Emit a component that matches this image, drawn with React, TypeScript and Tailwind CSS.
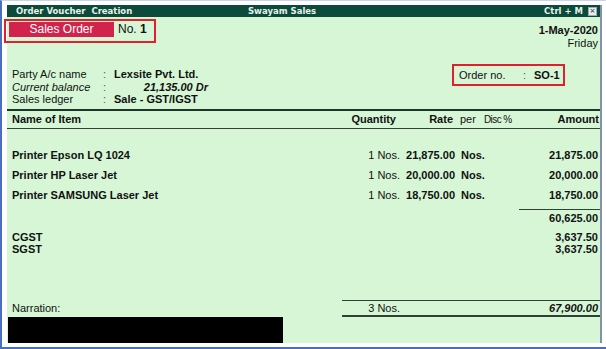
import React from "react";

const items = [
  { name: "Printer Epson LQ 1024", qty: "1 Nos.", rate: "21,875.00", per: "Nos.", amt: "21,875.00" },
  { name: "Printer HP Laser Jet", qty: "1 Nos.", rate: "20,000.00", per: "Nos.", amt: "20,000.00" },
  { name: "Printer SAMSUNG Laser Jet", qty: "1 Nos.", rate: "18,750.00", per: "Nos.", amt: "18,750.00" },
];

const cols = "grid grid-cols-[335px_59px_55px_25px_29px_1fr]";

export default function App() {
  return (
    <div className="w-[606px] h-[349px] bg-white border-l-2 border-b-2 border-t border-l-[#4a6fbf] border-b-[#4a6fbf] border-t-[#c9d5ee] pt-[4px] pl-[5px] font-['Liberation_Sans',Arial,sans-serif] text-[11px] text-[#111] overflow-hidden">
      <div className="w-[595px] h-[338px] bg-[#d6f6d6] border-r-2 border-[#8391aa] flex flex-col">
        {/* Title bar */}
        <div className="h-[12px] shrink-0 bg-[#0c4a3b] text-[#e6f3ea] flex items-center font-['DejaVu_Sans',sans-serif] font-bold text-[8.5px] leading-none">
          <div className="w-[241px] pl-[9px] whitespace-pre">Order Voucher  Creation</div>
          <div>Swayam Sales</div>
          <div className="flex-1" />
          <div className="mr-[5px]">Ctrl + M</div>
          <div className="w-[9px] h-[9px] mr-[3px] bg-[#e8eef0] border border-[#9aa] flex items-center justify-center text-[#556] text-[7px] leading-none">×</div>
        </div>

        {/* Header section */}
        <div className="h-[92px] shrink-0 flex justify-between">
          <div className="flex flex-col">
            <div className="mt-[2px] -ml-[3px] w-[152px] h-[24px] border-2 border-[#e0202e] flex items-start pt-[1px] pl-[3px]">
              <div className="w-[105px] h-[15px] bg-[#d1234c] text-white text-[12px] leading-[15px] text-center">Sales Order</div>
              <div className="ml-[4px] text-[12px] leading-[15px]">
                No. <span className="font-bold">1</span>
              </div>
            </div>
            <div className="mt-[25px] pl-[5px] leading-[12.5px]">
              <div className="flex">
                <div className="w-[91px]">Party A/c name</div>
                <div className="w-[11px] text-[#555]">:</div>
                <div className="font-bold">Lexsite Pvt. Ltd.</div>
              </div>
              <div className="flex">
                <div className="w-[91px] italic">Current balance</div>
                <div className="w-[11px] text-[#555]">:</div>
                <div className="w-[94px] text-right font-bold italic">21,135.00 Dr</div>
              </div>
              <div className="flex">
                <div className="w-[91px]">Sales ledger</div>
                <div className="w-[11px] text-[#555]">:</div>
                <div className="font-bold">Sale - GST/IGST</div>
              </div>
            </div>
          </div>
          <div className="flex flex-col items-end pr-[2px]">
            <div className="mt-[7px] font-bold leading-[13px]">1-May-2020</div>
            <div className="leading-[13px]">Friday</div>
            <div className="mt-[14px] mr-[33px] w-[113px] h-[22px] border-2 border-[#e0202e] flex items-center pl-[5px]">
              <div className="w-[64px]">Order no.</div>
              <div className="w-[11px] text-[#555]">:</div>
              <div className="font-bold">SO-1</div>
            </div>
          </div>
        </div>

        {/* Table header */}
        <div className="h-[2px] shrink-0 bg-[#1d3528]" />
        <div className={`${cols} h-[18px] shrink-0 items-center font-bold border-b border-[#2d4336]`}>
          <div className="pl-[5px]">Name of Item</div>
          <div className="text-right pr-[5px]">Quantity</div>
          <div className="text-right pr-[3px]">Rate</div>
          <div className="pl-[4px] font-normal">per</div>
          <div className="pl-[3px] font-normal whitespace-nowrap text-[10px] tracking-[-0.6px]">Disc %</div>
          <div className="text-right pr-[1px]">Amount</div>
        </div>

        {/* Items */}
        <div className="mt-[16px] flex flex-col">
          {items.map((it) => (
            <div key={it.name} className={`${cols} h-[20px] items-center`}>
              <div className="pl-[5px] font-bold">{it.name}</div>
              <div className="text-right pr-[1px]">{it.qty}</div>
              <div className="text-right pr-[1px] font-bold">{it.rate}</div>
              <div className="pl-[5px] font-bold">{it.per}</div>
              <div />
              <div className="text-right pr-[2px] font-bold">{it.amt}</div>
            </div>
          ))}
        </div>

        {/* Subtotal */}
        <div className="flex justify-end mt-[4px]">
          <div className="w-[81px] border-t border-[#2d4336] text-right pr-[2px] font-bold leading-[14px] pt-[1px]">60,625.00</div>
        </div>

        {/* Taxes */}
        <div className="mt-[6px] flex flex-col leading-[12px] font-bold">
          <div className="flex justify-between pl-[5px] pr-[2px]">
            <div>CGST</div>
            <div>3,637.50</div>
          </div>
          <div className="flex justify-between pl-[5px] pr-[2px]">
            <div>SGST</div>
            <div>3,637.50</div>
          </div>
        </div>

        <div className="flex-1" />

        {/* Total row */}
        <div className="flex items-end">
          <div className="w-[335px] pl-[5px] leading-[13px] pb-[2px]">Narration:</div>
          <div className="flex-1 border-t border-b-2 border-[#2d4336] h-[17px] flex items-center">
            <div className="w-[59px] text-right pr-[1px]">3 Nos.</div>
            <div className="flex-1 text-right pr-[2px] font-bold italic">67,900.00</div>
          </div>
        </div>

        {/* Narration box */}
        <div className="h-[26px] shrink-0 flex">
          <div className="ml-[1px] w-[275px] h-full bg-black" />
        </div>
      </div>
    </div>
  );
}
